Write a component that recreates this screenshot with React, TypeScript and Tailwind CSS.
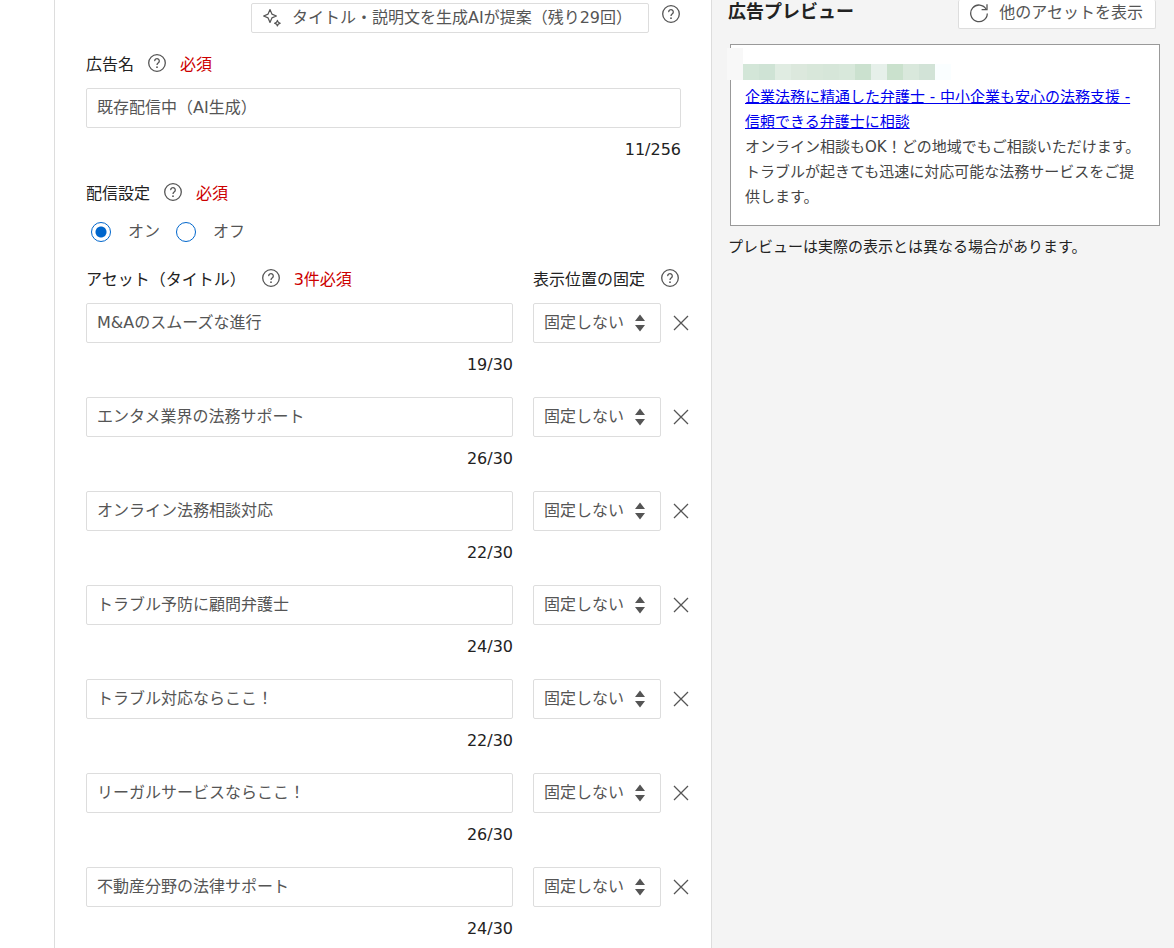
import { useState } from "react";

const FONT = "font-['DejaVu_Sans','Noto_Sans_CJK_JP',sans-serif]";

const titles = [
  { text: "M&Aのスムーズな進行", count: 19 },
  { text: "エンタメ業界の法務サポート", count: 26 },
  { text: "オンライン法務相談対応", count: 22 },
  { text: "トラブル予防に顧問弁護士", count: 24 },
  { text: "トラブル対応ならここ！", count: 22 },
  { text: "リーガルサービスならここ！", count: 26 },
  { text: "不動産分野の法律サポート", count: 24 },
];

const mosaic = [
  "bg-[#d3e6d8]", "bg-[#cfe3d5]", "bg-[#e0ece2]", "bg-[#dce8dd]", "bg-[#d8e7da]", "bg-[#d6e6d9]",
  "bg-[#d8e8db]", "bg-[#cbe1cf]", "bg-[#e6f0ea]", "bg-[#cae1cd]", "bg-[#d9e8dc]", "bg-[#d2e3d7]", "bg-[#fafeff]",
];

function HelpButton({ label }: { label: string }) {
  return (
    <button type="button" aria-label={label} className="block shrink-0 pb-1 text-[#555]">
      <svg width="18" height="18" viewBox="0 0 18 18" fill="none" stroke="currentColor" strokeWidth="1.3" className="block">
        <circle cx="9" cy="9" r="8.3" />
        <path d="M6.7 7.1a2.3 2.3 0 1 1 3.7 1.7c-.9.7-1.4 1.1-1.4 2.2" />
        <circle cx="9" cy="13.2" r=".9" fill="currentColor" stroke="none" />
      </svg>
    </button>
  );
}

function SparkleIcon() {
  return (
    <svg width="20" height="20" viewBox="0 0 20 20" fill="none" stroke="#555" strokeWidth="1.2" strokeLinejoin="round" aria-hidden="true">
      <path d="M8 1.6 9.9 6.1 14.4 8 9.9 9.9 8 14.4 6.1 9.9 1.6 8 6.1 6.1Z" />
      <path d="M15.4 12.4 16.3 14.3 18.2 15.2 16.3 16.1 15.4 18 14.5 16.1 12.6 15.2 14.5 14.3Z" />
    </svg>
  );
}

function RefreshIcon() {
  return (
    <svg width="20" height="20" viewBox="0 0 20 20" fill="none" stroke="#555" strokeWidth="1.3" aria-hidden="true">
      <path d="M17.2 6.2A8.3 8.3 0 1 0 18.3 10.5" />
      <path d="M18 1.2V6.6H12.6" />
    </svg>
  );
}

function Field({ id, label, value }: { id: string; label: string; value: string }) {
  return (
    <input
      id={id}
      aria-label={label}
      defaultValue={value}
      className="block h-10 w-full rounded-xs border border-[#ddd] bg-white px-2.5 pb-1 text-base text-[#555] outline-none"
    />
  );
}

function TitleRow({ index, text, count }: { index: number; text: string; count: number }) {
  return (
    <li className="flex h-[94px] items-start">
      <div className="min-w-0 flex-1">
        <Field id={`title-${index}`} label={`タイトル ${index}`} value={text} />
        <p className="mt-2 text-right leading-7">{count}/30</p>
      </div>
      <div className="relative ml-5 w-32 shrink-0">
        <select
          aria-label={`表示位置の固定 ${index}`}
          className="block h-10 w-full appearance-none rounded-xs border border-[#ddd] bg-white px-2.5 text-base text-[#555] outline-none"
        >
          <option>固定しない</option>
        </select>
        <svg width="12" height="18" viewBox="0 0 12 18" fill="#555" className="pointer-events-none absolute top-[11px] right-[15px]" aria-hidden="true">
          <path d="M6 .5 11 7H1ZM1 11H11L6 17.5Z" />
        </svg>
      </div>
      <button type="button" aria-label={`タイトル ${index} を削除`} className="ml-3 flex h-10 w-4 shrink-0 items-center justify-center">
        <svg width="16" height="16" viewBox="0 0 16 16" stroke="#555" strokeWidth="1.3" aria-hidden="true">
          <path d="M1 1 15 15M15 1 1 15" />
        </svg>
      </button>
    </li>
  );
}

export default function App() {
  const [on, setOn] = useState(true);
  const radio =
    "size-5 appearance-none rounded-full border border-[#06c] bg-white checked:bg-[radial-gradient(circle,#06c_5px,#fff_6px)]";
  return (
    <div className={`flex h-screen overflow-hidden bg-white text-base text-[#222] ${FONT}`}>
      <main className="ml-[54px] min-w-0 flex-1 border-l border-[#ddd] pl-[31px]">
        <div className="flex h-[33px] items-start justify-end pr-[31px]">
          <button type="button" className="mt-[3px] flex h-[30px] items-center rounded-xs border border-[#ddd] pr-4 pl-2.5 whitespace-nowrap text-[#555]">
            <SparkleIcon />
            <span className="ml-2.5">タイトル・説明文を生成AIが提案（残り29回）</span>
          </button>
          <span className="mt-[5px] ml-[13px]"><HelpButton label="生成AIの説明" /></span>
        </div>

        <div className="mt-5 flex h-6 items-center">
          <label htmlFor="ad-name">広告名</label>
          <span className="ml-3.5"><HelpButton label="広告名の説明" /></span>
          <span className="ml-3.5 text-[#c00]">必須</span>
        </div>
        <div className="mt-[11px] pr-[30px]">
          <Field id="ad-name" label="広告名" value="既存配信中（AI生成）" />
          <p className="mt-2 text-right leading-7">11/256</p>
        </div>

        <fieldset className="mt-[18px]">
          <legend className="flex h-6 items-center">
            配信設定
            <span className="ml-3.5"><HelpButton label="配信設定の説明" /></span>
            <span className="ml-3.5 text-[#c00]">必須</span>
          </legend>
          <div className="mt-[14px] ml-[5px] flex h-6 items-center text-[#555]">
            <input id="on" type="radio" name="delivery" checked={on} onChange={() => setOn(true)} className={radio} />
            <label htmlFor="on" className="ml-[17px]">オン</label>
            <input id="off" type="radio" name="delivery" checked={!on} onChange={() => setOn(false)} className={`ml-4 ${radio}`} />
            <label htmlFor="off" className="ml-[17px]">オフ</label>
          </div>
        </fieldset>

        <div className="mt-6 flex h-6 items-center pr-8">
          <h2>アセット（タイトル）</h2>
          <span className="ml-4"><HelpButton label="アセットの説明" /></span>
          <span className="ml-3.5 text-[#c00]">3件必須</span>
          <span className="ml-auto">表示位置の固定</span>
          <span className="ml-4"><HelpButton label="表示位置の固定の説明" /></span>
        </div>
        <ul className="mt-[11px] pr-[22px]">
          {titles.map((t, i) => (
            <TitleRow key={t.text} index={i + 1} text={t.text} count={t.count} />
          ))}
        </ul>
      </main>

      <aside className="w-[463px] shrink-0 border-l border-[#ddd] bg-[#f4f4f4] pr-3.5 pl-4">
        <div className="flex h-7 items-start justify-between">
          <h2 className="text-lg leading-6 font-bold">広告プレビュー</h2>
          <button type="button" className="mr-1 flex h-[29px] items-center rounded-xs border border-t-0 border-[#ddd] bg-white pr-3 pb-0.5 pl-2.5 text-[#555]">
            <RefreshIcon />
            <span className="ml-2.5">他のアセットを表示</span>
          </button>
        </div>
        <section className="mt-4 ml-0.5 border border-[#999] bg-white pb-[15px] text-[15px] leading-[25px]">
          <div className="mt-[3px] -ml-1 flex h-8 items-end">
            <span className="h-8 w-4 bg-[#f8f8f8]" />
            {mosaic.map((c, i) => (
              <span key={i} className={`size-4 ${c}`} />
            ))}
          </div>
          <div className="mt-[5px] pr-4 pl-3.5">
            <a href="#" className="text-[#00e] underline">企業法務に精通した弁護士 - 中小企業も安心の法務支援 - 信頼できる弁護士に相談</a>
            <p className="text-[#444]">オンライン相談もOK！どの地域でもご相談いただけます。トラブルが起きても迅速に対応可能な法務サービスをご提供します。</p>
          </div>
        </section>
        <p className="mt-[9px] text-[15px] leading-6">プレビューは実際の表示とは異なる場合があります。</p>
      </aside>
    </div>
  );
}
